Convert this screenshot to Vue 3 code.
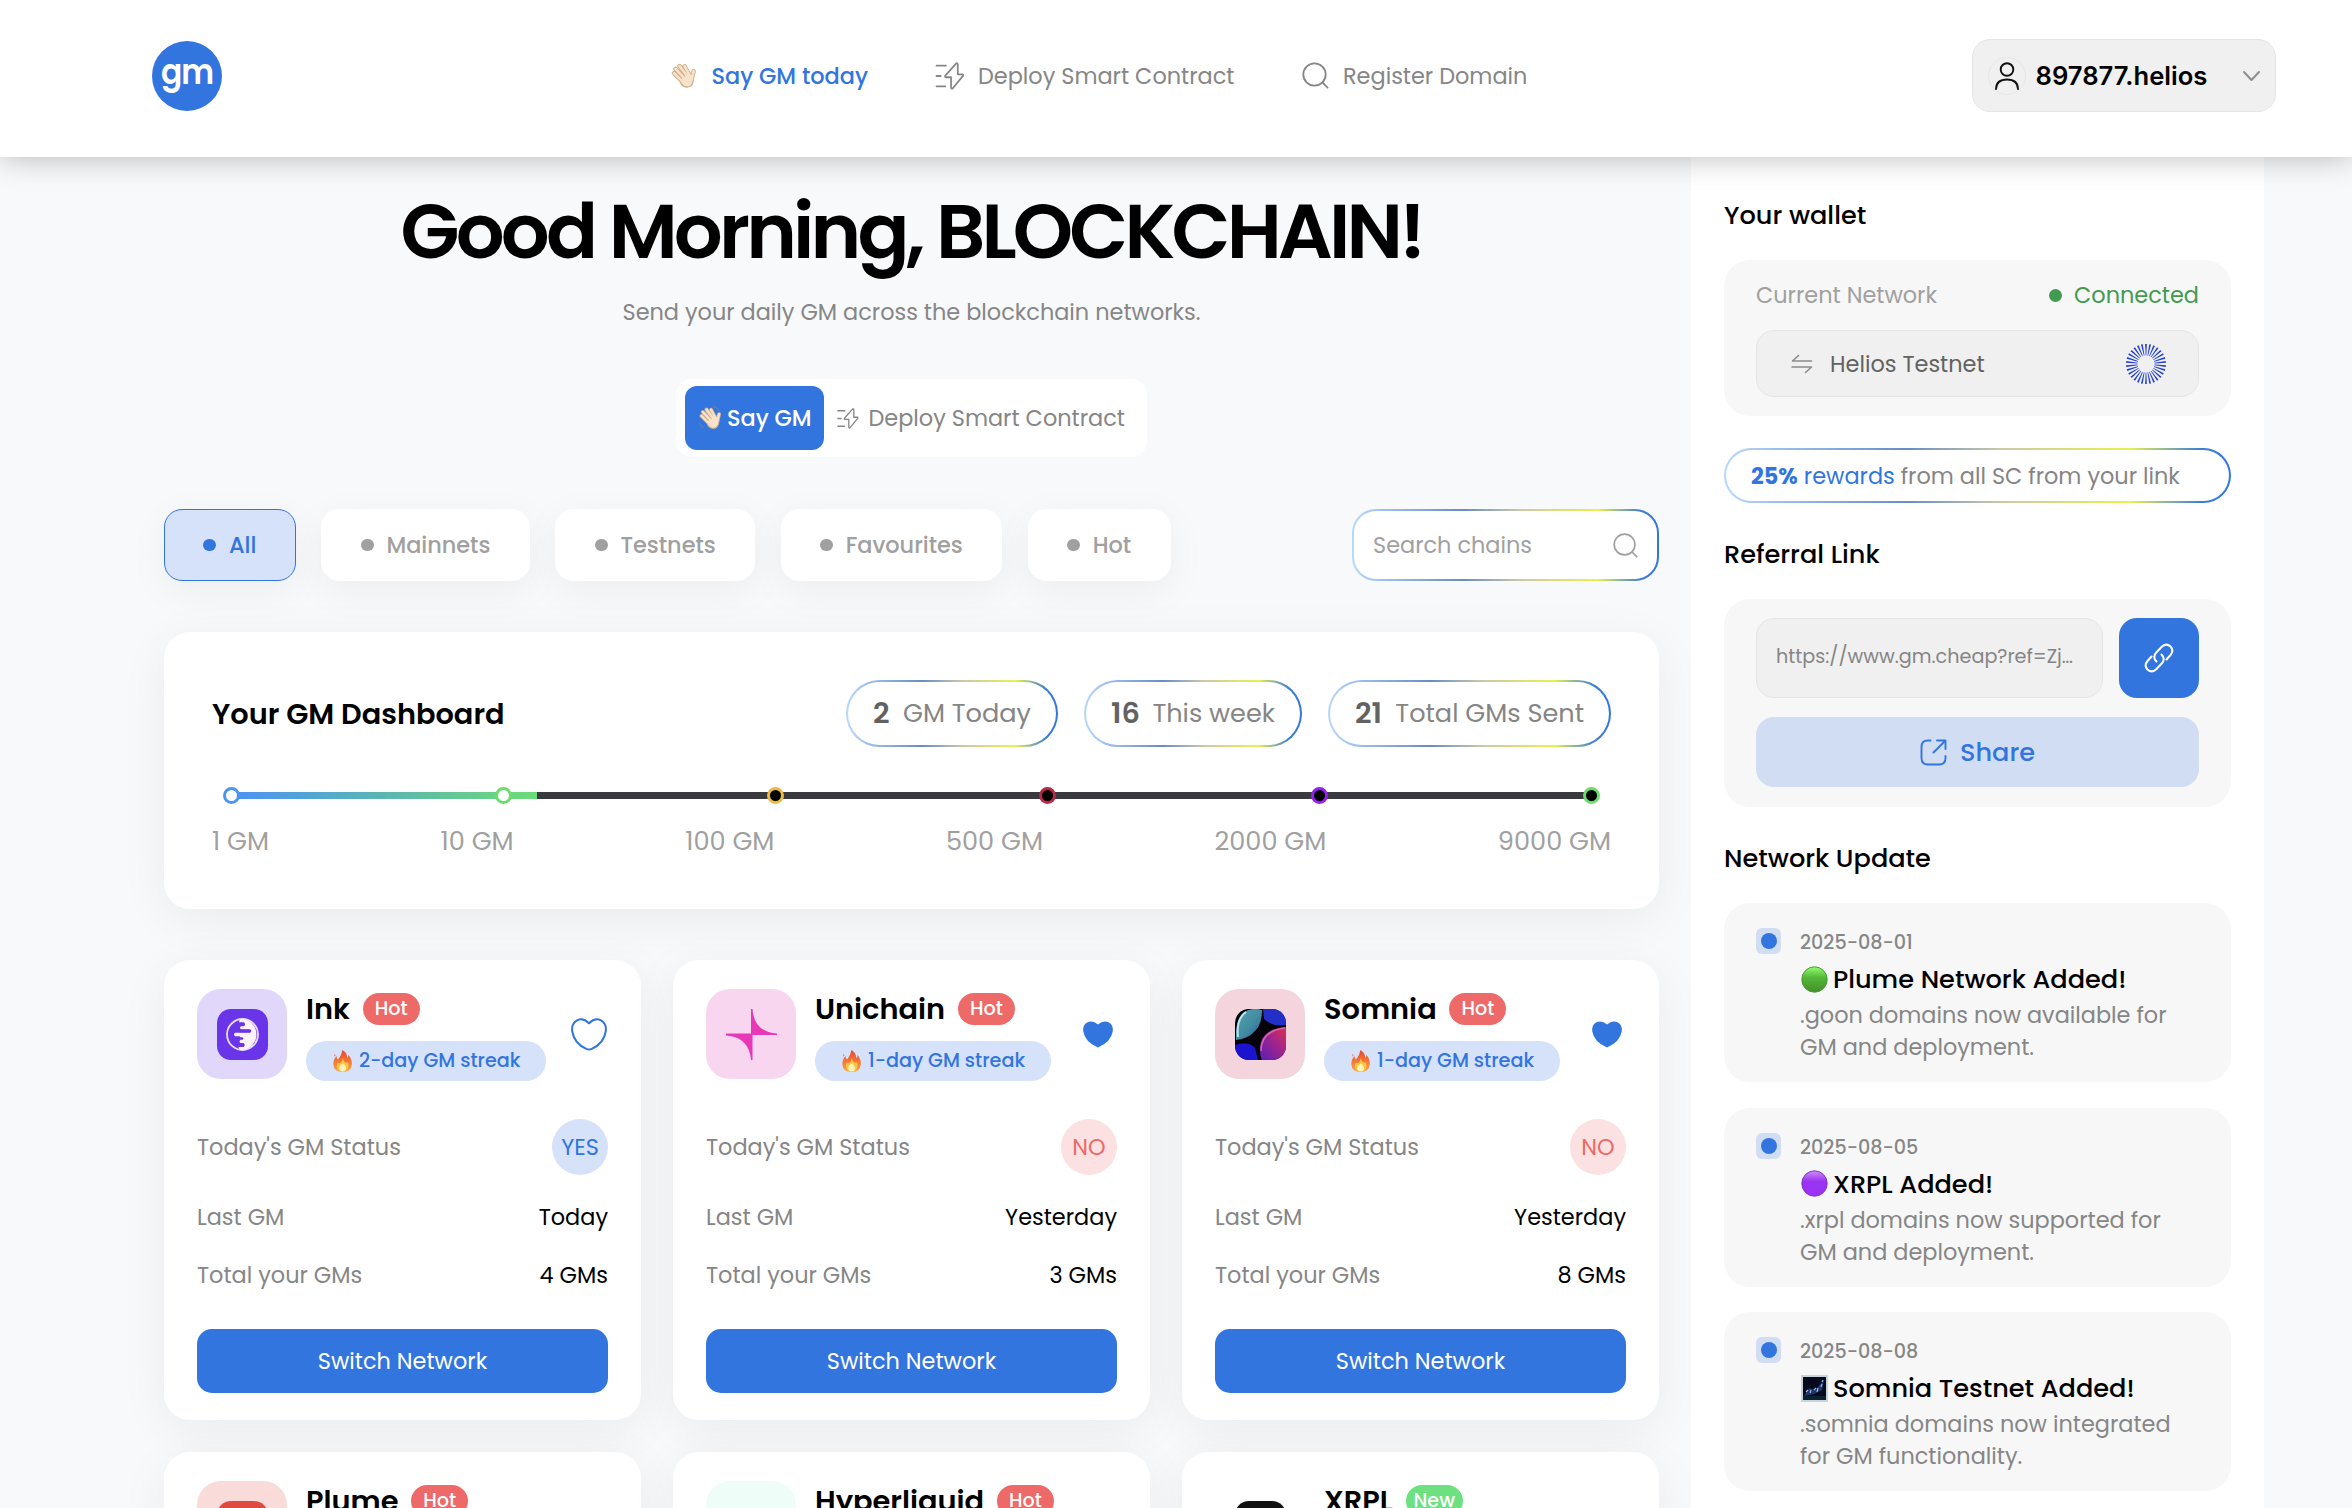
<script setup>
const filters = [
  { label: 'All', active: true },
  { label: 'Mainnets' },
  { label: 'Testnets' },
  { label: 'Favourites' },
  { label: 'Hot' }
]

const stats = [
  { value: '2', label: 'GM Today', width: 212 },
  { value: '16', label: 'This week', width: 218 },
  { value: '21', label: 'Total GMs Sent', width: 283 }
]

const stops = [
  { color: '#4b93f5', done: true },
  { color: '#6cdc70', done: true },
  { color: '#e8bd45' },
  { color: '#b82945' },
  { color: '#9421ef' },
  { color: '#6cdc70' }
]

const steps = ['1 GM', '10 GM', '100 GM', '500 GM', '2000 GM', '9000 GM']

const chains = [
  { id: 'ink', name: 'Ink', tag: 'Hot', tile: '#e1d7fa', streak: '2-day GM streak', yes: true, last: 'Today', total: '4 GMs', fav: false },
  { id: 'unichain', name: 'Unichain', tag: 'Hot', tile: '#f8d6ef', streak: '1-day GM streak', last: 'Yesterday', total: '3 GMs', fav: true },
  { id: 'somnia', name: 'Somnia', tag: 'Hot', tile: '#f4d5dd', streak: '1-day GM streak', last: 'Yesterday', total: '8 GMs', fav: true }
]

const nextChains = [
  { id: 'plume', name: 'Plume', tag: 'Hot', tile: '#f9dbda' },
  { id: 'hyper', name: 'Hyperliquid', tag: 'Hot', tile: '#effdf9' },
  { id: 'xrpl', name: 'XRPL', tag: 'New', tile: '#ffffff' }
]

const updates = [
  { date: '2025-08-01', icon: 'green', title: 'Plume Network Added!', lines: ['.goon domains now available for', 'GM and deployment.'] },
  { date: '2025-08-05', icon: 'purple', title: 'XRPL Added!', lines: ['.xrpl domains now supported for', 'GM and deployment.'] },
  { date: '2025-08-08', icon: 'night', title: 'Somnia Testnet Added!', lines: ['.somnia domains now integrated', 'for GM functionality.'] }
]

const rays = Array.from({ length: 30 }, (_, i) => i * 12)
</script>

<template>
  <div class="page">
    <svg class="defs" width="0" height="0">
      <defs>
        <linearGradient id="skin" x1="0" y1="0" x2="1" y2="1">
          <stop offset="0" stop-color="#f6dfc7" /><stop offset="1" stop-color="#fbe6d0" />
        </linearGradient>
        <linearGradient id="flame" x1="0" y1="0" x2="0" y2="1">
          <stop offset="0" stop-color="#e8472c" /><stop offset=".6" stop-color="#f6803a" /><stop offset="1" stop-color="#f9a63c" />
        </linearGradient>
        <linearGradient id="green" x1="0" y1="0" x2="0" y2="1">
          <stop offset="0" stop-color="#8fff70" /><stop offset=".42" stop-color="#55b838" /><stop offset="1" stop-color="#438f2b" />
        </linearGradient>
        <linearGradient id="purple" x1="0" y1="0" x2="0" y2="1">
          <stop offset="0" stop-color="#cf8bf8" /><stop offset=".42" stop-color="#9b33f3" /><stop offset="1" stop-color="#9a31f5" />
        </linearGradient>
        <linearGradient id="teal" x1="0" y1="0" x2="1" y2="1">
          <stop offset="0" stop-color="#5aa0b4" /><stop offset=".55" stop-color="#418ca0" /><stop offset="1" stop-color="#2b58b0" />
        </linearGradient>
        <linearGradient id="magenta" x1="1" y1="0" x2="0" y2="1">
          <stop offset="0" stop-color="#e02c50" /><stop offset=".45" stop-color="#a0258c" /><stop offset="1" stop-color="#5a1fb4" />
        </linearGradient>
        <clipPath id="round"><rect width="51" height="51" rx="14" /></clipPath>
        <symbol id="wave" viewBox="0 0 26 27">
          <g fill="none" stroke="#cfae8b" stroke-linecap="round" stroke-linejoin="round">
            <path stroke-width="4.400" d="M3 11.200l7 7M4.500 6.800l8 8.500M8.500 4l7.500 10M13.600 4.200l5.400 10M22.600 9.200 20.500 18" />
            <path stroke-width="1.400" fill="url(#skin)" d="M8.500 17.500 18.500 11l3.500 2.500q1 8-2.500 10.500-3.500 2-7 .2-2.500-1.700-4-6.700Z" />
          </g>
          <g fill="none" stroke="#f8e2ca" stroke-linecap="round">
            <path stroke-width="2.600" d="M3 11.200l7 7M4.500 6.800l8 8.500M8.500 4l7.500 10M13.600 4.200l5.400 10M22.600 9.200 20.500 18" />
            <path stroke-width="7" d="M13.500 19l4-1.500" />
          </g>
        </symbol>
        <symbol id="bolt" viewBox="0 0 28 27">
          <g fill="none" stroke="currentColor" stroke-width="1.700" stroke-linecap="round" stroke-linejoin="round">
            <path d="M1 3.500h9M1 13.500h4M1 23.500h8.500" />
            <path d="M19.800 1.500 9.500 13.200q-.8 1.300.5 1.500h5v10q.4 1.800 1.700.6L26.500 13.400q.8-1.300-.6-1.500h-4.400V2.300q-.3-1.700-1.700-.8Z" />
          </g>
        </symbol>
        <symbol id="search" viewBox="0 0 27 27">
          <g fill="none" stroke="currentColor" stroke-width="1.800" stroke-linecap="round">
            <circle cx="12.500" cy="12.500" r="11.200" /><path d="m20.800 20.800 4.800 4.800" />
          </g>
        </symbol>
      </defs>
    </svg>

    <header class="top">
      <div class="logo"><span>gm</span></div>
      <nav class="nav">
        <a class="link on"><svg class="i-hand"><use href="#wave" /></svg><span>Say GM today</span></a>
        <a class="link second"><svg class="i-bolt"><use href="#bolt" /></svg><span>Deploy Smart Contract</span></a>
        <a class="link third"><svg class="i-search"><use href="#search" /></svg><span>Register Domain</span></a>
      </nav>
      <button class="account">
        <i class="avatar">
          <svg width="26" height="28" viewBox="0 0 26 28" fill="none" stroke="#111" stroke-width="1.900" stroke-linecap="round">
            <circle cx="13" cy="7.500" r="6.300" /><path d="M2 27q.3-9.500 11-9.500T24 27" />
          </svg>
        </i>
        <span>897877.helios</span>
        <svg class="chev" width="19" height="12" viewBox="0 0 19 12" fill="none" stroke="#8d8d8d" stroke-width="2" stroke-linecap="round" stroke-linejoin="round"><path d="m2 2 7.500 8L17 2" /></svg>
      </button>
    </header>

    <div class="body">
      <main class="main">
        <h1>Good Morning, BLOCKCHAIN!</h1>
        <p class="sub">Send your daily GM across the blockchain networks.</p>

        <div class="switch">
          <button class="say">
            <svg class="i-hand" viewBox="-1 -1 28 29">
              <use href="#wave" width="26" height="27" />
              <path d="M16 .5q4 .500 5.500 4.500M.5 18.500q.8 4 4.500 5.500" fill="none" stroke="#5f7ea8" stroke-width="1.400" stroke-linecap="round" />
            </svg>
            <span>Say GM</span>
          </button>
          <button class="deploy"><svg class="i-bolt"><use href="#bolt" /></svg><span>Deploy Smart Contract</span></button>
        </div>

        <div class="filters">
          <button v-for="f in filters" :key="f.label" class="chip" :class="{ active: f.active }">
            <i></i><span>{{ f.label }}</span>
          </button>
          <label class="search"><span>Search chains</span><svg><use href="#search" /></svg></label>
        </div>

        <section class="dash">
          <div class="dash-head">
            <h2>Your GM Dashboard</h2>
            <div class="stats">
              <div v-for="s in stats" :key="s.label" class="stat" :style="{ width: s.width + 'px' }">
                <b>{{ s.value }}</b><span>{{ s.label }}</span>
              </div>
            </div>
          </div>
          <div class="track">
            <div class="line"><div class="done"></div></div>
            <div class="stops">
              <i v-for="(s, n) in stops" :key="n" :class="{ hit: s.done }" :style="{ borderColor: s.color }"></i>
            </div>
          </div>
          <div class="steps"><span v-for="s in steps" :key="s">{{ s }}</span></div>
        </section>

        <section class="grid">
          <article v-for="c in chains" :key="c.id" class="card">
            <div class="head">
              <div class="tile" :style="{ background: c.tile }">
                <svg width="51" height="51" viewBox="0 0 51 51">
                  <g v-if="c.id === 'ink'" clip-path="url(#round)">
                    <rect width="51" height="51" fill="#6a34e8" />
                    <circle cx="25.500" cy="25.500" r="15.500" fill="none" stroke="#e9dcfb" stroke-width="1.800" />
                    <path d="M24 10a15.500 15.500 0 1 1 0 31q-2.500-1-2.500-3h5q2.500-2 0-4h-3q-2-1.500 0-3h-1q2.500-2 0-3.800H18q-2-1.700 0-3.500h15q2.500-1.700 0-3.500H24q-2-1.500 0-3h3q2-2 0-4h-5q0-2.500 2-3.200Z" fill="#fdf4fb" />
                    <path d="M23 22h10M19 29.500h6" stroke="#6a34e8" stroke-width="2.600" stroke-linecap="round" />
                  </g>
                  <path v-else-if="c.id === 'unichain'" d="M25 0h1.500Q28 23 51 24.500V26H26.500v25H25Q23 28 0 26.500V24.500h25Z" fill="#e838b8" />
                  <g v-else clip-path="url(#round)">
                    <rect width="51" height="51" fill="#04030a" />
                    <path d="M28 0h23v16q-14 2-22-6Z" fill="#2330c8" />
                    <path d="M1 31Q0 10 9 3q9-5 18-2 0 14-7 21Q13 30 1 31Z" fill="url(#teal)" />
                    <path d="M3 28Q1 10 11 3" fill="none" stroke="#b9e6ee" stroke-width="2" />
                    <path d="M0 36q14-4 20 3l3 12H8Q0 46 0 36Z" fill="#1b14cf" />
                    <path d="M51 18Q25 20 25 40q0 8 2 11h14q10-2 10-12Z" fill="url(#magenta)" />
                    <path d="M50 19Q26 22 26 42" fill="none" stroke="#d567b0" stroke-width="1.500" />
                  </g>
                </svg>
              </div>
              <div class="info">
                <div class="name"><h3>{{ c.name }}</h3><em>{{ c.tag }}</em></div>
                <div class="streak">
                  <svg width="19" height="22" viewBox="0 0 19 22">
                    <path d="M9.500 0q5 3 4.500 8 1.500-.5 1.500-3 3.500 4 3.300 9-.6 8-9.300 8T.3 14Q.5 9 3.500 6q0 3 1.600 3.600Q8.500 5.500 9.500 0ZM1 4l1.500 1L2 7Z" fill="url(#flame)" />
                    <path d="M9.700 8q.5 3 2.800 4.500 1.300 1 1.700-.8 1.800 2 1.300 5-1 5-5.800 5T3.800 17q-.3-3 1.200-4.600.8 1 1.500.8Q9.500 12 9.700 8Z" fill="#fbc540" />
                    <path d="M9.500 13.500q3.500 2 3.500 5-.5 3-3.400 3t-3.400-3q.1-3 3.300-5Z" fill="#fff3b8" />
                  </svg>
                  <span>{{ c.streak }}</span>
                </div>
              </div>
              <svg class="heart" width="39" height="39" viewBox="0 0 39 39">
                <path v-if="c.fav" d="M20 9.500Q14.500 4.500 9 7.500 4.500 10 5.300 16.500 7 27 20 32.500 33 27 34.700 16.500 35.500 10 31 7.500 25.500 4.500 20 9.500Z" fill="#3275df" />
                <path v-else d="M20 8.200Q14 2.200 8 5.300 2.300 8.500 3.200 16 5 28.500 17.300 33.800q2.700 1.200 5.400 0Q35 28.500 36.800 16 37.700 8.500 32 5.300 26 2.200 20 8.200Z" fill="none" stroke="#3275df" stroke-width="2" stroke-linejoin="round" />
              </svg>
            </div>
            <div class="row status">
              <span>Today's GM Status</span>
              <i :class="{ yes: c.yes }">{{ c.yes ? 'YES' : 'NO' }}</i>
            </div>
            <div class="row last"><span>Last GM</span><b>{{ c.last }}</b></div>
            <div class="row total"><span>Total your GMs</span><b>{{ c.total }}</b></div>
            <button class="go">Switch Network</button>
          </article>

          <article v-for="c in nextChains" :key="c.id" class="card">
            <div class="head">
              <div class="tile" :style="{ background: c.tile }">
                <svg width="51" height="51" viewBox="0 0 51 51">
                  <rect v-if="c.id === 'plume'" width="51" height="51" rx="14" fill="#e0493f" />
                  <path v-else-if="c.id === 'hyper'" d="M2 27q0-16 11-17 7 0 12 6 5-9 13-9 12 0 12 20T38 44q-7 0-13-8-5 6-12 6Q2 40 2 27Z" fill="#9cefd9" />
                  <rect v-else width="51" height="51" rx="14" fill="#111111" />
                </svg>
              </div>
              <div class="info">
                <div class="name"><h3>{{ c.name }}</h3><em :class="c.tag.toLowerCase()">{{ c.tag }}</em></div>
              </div>
            </div>
          </article>
        </section>
      </main>

      <aside class="side">
        <h4>Your wallet</h4>
        <div class="wallet">
          <div class="net">
            <span>Current Network</span>
            <div class="conn"><i></i><span>Connected</span></div>
          </div>
          <div class="testnet">
            <svg width="22" height="20" viewBox="0 0 22 20" fill="none" stroke="#8b8b8b" stroke-width="1.600" stroke-linecap="round" stroke-linejoin="round"><path d="M7.500 1.500 1.500 7h19M1 13h19.500l-6 5.500" /></svg>
            <span>Helios Testnet</span>
            <svg class="helios" width="40" height="40" viewBox="-20 -20 40 40">
              <path v-for="r in rays" :key="r" d="M-.3-8.500h.6L.9-20H-.9Z" fill="#2440d2" :transform="`rotate(${r})`" />
            </svg>
          </div>
        </div>
        <div class="reward"><p><b>25%</b> <strong>rewards</strong> from all SC from your link</p></div>

        <h4 class="ref-title">Referral Link</h4>
        <div class="referral">
          <div class="ref-row">
            <div class="url">https://www.gm.cheap?ref=Zj…</div>
            <button class="copy">
              <svg width="30" height="30" viewBox="0 0 30 30" fill="none" stroke="#fff" stroke-width="2" stroke-linecap="round">
                <path d="M12.500 18.500q-4.500-4.500 0-9.200l5.500-5.800q4.500-3.800 8.500 0 3.800 4 0 8.500l-4 4.500M17.500 11.500q4.500 4.500 0 9.200L12 26.500q-4.500 3.800-8.500 0-3.800-4 0-8.500l4-4.500" />
              </svg>
            </button>
          </div>
          <button class="share">
            <svg width="27" height="27" viewBox="0 0 27 27" fill="none" stroke="#3275df" stroke-width="1.900" stroke-linecap="round" stroke-linejoin="round">
              <path d="M10.500 1.500H8q-6.500 0-6.500 6.500v11q0 6.500 6.500 6.500h11q6.500 0 6.500-6.500v-2M17 1.500h8.500v8.500M25 2 13.500 13.500" />
            </svg>
            <span>Share</span>
          </button>
        </div>

        <h4 class="upd-title">Network Update</h4>
        <div class="updates">
          <article v-for="u in updates" :key="u.date" class="update">
            <i class="mark"></i>
            <div>
              <div class="date">{{ u.date }}</div>
              <div class="title">
                <svg width="27" height="27" viewBox="0 0 27 27">
                  <template v-if="u.icon === 'night'">
                    <rect width="27" height="27" fill="#c9d3da" /><rect x="2" y="2" width="23" height="23" fill="#060a1c" />
                    <path d="M3 21 8 13l6 2 9-10-2 10-8 4Z" fill="#26427c" opacity=".8" />
                    <path d="m5 17 2-2m2 3 1-3m3 0 2-2m1 4 1-4m3-1 1-3m0-2 1-2" stroke="#90b8f0" stroke-width="1.200" />
                    <path d="M2 21h23v4H2z" fill="#0b2030" />
                  </template>
                  <circle v-else cx="13.500" cy="13.500" r="12.700" :fill="`url(#${u.icon})`" :stroke="u.icon === 'green' ? '#499a31' : '#8434c8'" stroke-width="1" />
                </svg>
                <span>{{ u.title }}</span>
              </div>
              <p v-for="l in u.lines" :key="l">{{ l }}</p>
            </div>
          </article>
        </div>
      </aside>
    </div>
  </div>
</template>

<style>
html, body { margin: 0; background: #f8f9fb; }
</style>

<style scoped>
.page {
  width: 2352px; height: 1508px; overflow: hidden; display: flex; flex-direction: column;
  background: #f8f9fb; color: #000; font: 400 22.400px/34px Poppins, Inter, sans-serif; white-space: nowrap;
}
.page *, .page *::before { box-sizing: border-box; }
.defs { position: absolute; }
button { font: inherit; border: 0; padding: 0; margin: 0; color: inherit; text-align: left; flex: none; }
h1, h2, h3, h4, p { margin: 0; font-weight: inherit; }
svg { display: block; flex: none; }
i, em { font-style: normal; display: block; flex: none; }

.top {
  height: 157px; flex: none; display: flex; align-items: center; padding: 0 76px 6px 152px; background: #fff;
  position: relative; z-index: 2; box-shadow: 0 0 30px rgba(0, 0, 0, .27);
}
.logo {
  width: 70px; height: 70px; border-radius: 50%; background: #3275df; color: #fff;
  display: flex; justify-content: center; font-weight: 600; font-size: 36px; line-height: 61px; letter-spacing: -1px;
}
.logo span { transform: scaleX(.87); }
.nav { display: flex; margin-left: 449px; color: #868686; }
.link { display: flex; align-items: center; }
.link.on { color: #3275df; font-weight: 500; width: 199px; }
.link .i-hand { width: 26px; height: 27px; margin-right: 14.500px; }
.link .i-bolt { width: 30px; height: 28px; margin-right: 13px; }
.link .i-search { width: 27px; height: 27px; margin-right: 14px; }
.second { margin-left: 65px; width: 301px; }
.third { margin-left: 66px; }
.account {
  margin-left: auto; width: 304px; height: 73px; border: 1px solid #e5e5e5; border-radius: 18px; background: #f0f0f0;
  display: flex; align-items: center; padding: 0 14px 0 15px; font: 600 25.600px/34px Inter, sans-serif; color: #000;
}
.avatar { width: 38px; height: 38px; border-radius: 50%; border: 1px solid #e6e6e6; display: flex; align-items: center; justify-content: center; margin-right: 9.500px; }
.chev { margin-left: auto; }

.body { display: flex; flex: 1; min-height: 0; }
.main { width: 1495px; margin-left: 164px; padding-top: 24px; flex: none; }
h1 { font-size: 76.800px; line-height: 100px; font-weight: 600; text-align: center; letter-spacing: -.05em; }
.sub { margin-top: 13px; line-height: 36px; color: #868686; text-align: center; }
.switch { width: 471px; height: 78px; margin: 49px auto 0; background: #fff; border-radius: 16px; display: flex; padding: 7px 9px; }
.say { width: 139px; height: 64px; border-radius: 12px; background: #3275df; color: #fff; display: flex; align-items: center; padding-left: 13px; font-weight: 500; }
.say .i-hand { width: 25px; height: 26px; margin-right: 4px; }
.deploy { background: none; display: flex; align-items: center; padding-left: 12.500px; color: #868686; }
.deploy .i-bolt { width: 22px; height: 21px; margin-right: 10px; }

.filters { display: flex; gap: 25.600px; margin-top: 52px; }
.chip {
  height: 72px; border-radius: 18px; background: #fff; border: 1.600px solid #fff; display: flex; align-items: center; padding: 0 38.400px;
  color: #a0a0a0; font-weight: 500; box-shadow: 0 10px 40px rgba(0, 0, 0, .05);
}
.chip i { width: 12.800px; height: 12.800px; border-radius: 50%; background: currentColor; margin-right: 12.800px; }
.chip.active { background: #d6e2f9; border-color: #3275df; color: #3275df; }
.search, .stat, .reward {
  border: 2px solid transparent;
  background: linear-gradient(#fff, #fff) padding-box,
    linear-gradient(90deg, #b8d8fc 0%, #9fc0ee 10%, #6a8cc4 36%, #ccc9a8 55%, #e8f24c 80%, #3d7fd4 94%, #3275df 100%) border-box;
}
.search { width: 307px; height: 72px; margin-left: auto; border-radius: 24px; display: flex; align-items: center; justify-content: space-between; padding: 0 19px 0 19px; color: #a0a0a0; }
.search svg { width: 25px; height: 25px; }

.dash { height: 277px; margin-top: 51px; border-radius: 26px; background: #fff; padding: 48px 48px 0; box-shadow: 0 10px 50px rgba(0, 0, 0, .06); }
.dash-head { display: flex; align-items: center; height: 67px; justify-content: space-between; }
h2 { font-size: 28.800px; font-weight: 600; }
.stats { display: flex; gap: 26px; }
.stat { height: 67px; border-radius: 34px; display: flex; align-items: center; justify-content: space-between; padding: 0 25px 1px; font-size: 25.600px; color: #858585; }
.stat b { font-size: 28.800px; font-weight: 600; color: #626262; }
.track { position: relative; height: 17px; margin: 39.500px 19px 0 19.500px; }
.line { position: absolute; left: 0; right: 0; top: 5px; height: 7px; background: #39393f; }
.done { width: 305px; height: 7px; background: linear-gradient(90deg, #4b93f5, #5ebda4 60%, #6cdc78); }
.stops { position: relative; display: flex; justify-content: space-between; margin: 0 -8.500px; }
.stops i { width: 17px; height: 17px; border-radius: 50%; border: 3px solid; background: #000; }
.stops i.hit { background: #fff; }
.steps { display: flex; justify-content: space-between; margin-top: 19px; font-size: 25.600px; line-height: 36px; color: #a0a0a0; }

.grid { display: grid; grid-template-columns: repeat(3, 477px); gap: 32px; margin-top: 51px; }
.card { height: 460px; border-radius: 26px; background: #fff; padding: 29px 33px 0; box-shadow: 0 10px 50px rgba(0, 0, 0, .06); color: #868686; }
.head { display: flex; align-items: center; height: 90px; }
.tile { width: 90px; height: 90px; border-radius: 24px; display: flex; align-items: center; justify-content: center; flex: none; }
.info { margin-left: 19px; height: 92px; padding-top: 5px; }
.name { display: flex; align-items: center; height: 32px; color: #000; }
h3 { font-size: 28.800px; font-weight: 600; margin-right: 12.800px; }
em { width: 57px; height: 32px; border-radius: 16px; text-align: center; background: #ed6a68; color: #fff; font-size: 19.200px; line-height: 32px; font-weight: 500; }
em.new { background: #6de080; }
.streak { display: flex; align-items: center; width: max-content; height: 40px; margin-top: 16px; padding: 0 26px 0 27px; border-radius: 20px; background: #d6e2f9; color: #3275df; font-size: 19.200px; font-weight: 500; }
.streak svg { margin-right: 7px; }
.heart { margin-left: auto; }
.row { display: flex; justify-content: space-between; align-items: center; height: 34px; }
.row b { font-weight: 400; color: #000; }
.status { height: 56px; margin-top: 40px; }
.status i { width: 56px; height: 56px; border-radius: 50%; background: #fbe1e1; color: #ed6a68; display: flex; align-items: center; justify-content: center; }
.status i.yes { background: #d6e2f9; color: #3275df; }
.last { margin-top: 25px; }
.total { margin-top: 24px; }
.go { margin-top: 37px; width: 411px; height: 64px; border-radius: 15px; background: #3275df; color: #fff; display: flex; align-items: center; justify-content: center; }

.side { width: 573px; margin-left: 32px; background: #fff; padding: 38px 33px 0; flex: none; }
h4 { font-size: 25.600px; line-height: 40px; font-weight: 500; }
.wallet, .referral, .update { background: #f7f7f7; border-radius: 26px; padding: 0 32px; }
.wallet { height: 156px; margin-top: 25px; padding-top: 17px; }
.net { display: flex; justify-content: space-between; height: 36px; align-items: center; color: #a0a0a0; }
.conn { display: flex; align-items: center; color: #439a52; }
.conn i { width: 13px; height: 13px; border-radius: 50%; background: #439a52; margin-right: 12px; }
.testnet { display: flex; align-items: center; height: 67px; margin-top: 17px; border: 1px solid #e5e5e5; border-radius: 18px; background: #f0f0f0; padding: 0 32px 0 34px; color: #626262; }
.testnet span { margin-left: 17px; }
.helios { margin-left: auto; }
.reward { height: 55px; margin-top: 32px; border-radius: 28px; display: flex; align-items: center; padding-left: 25px; color: #858585; }
.reward b, .reward strong { color: #3275df; }
.reward b { font-weight: 700; }
.reward strong { font-weight: 400; }
.ref-title, .upd-title { margin-top: 31px; }
.referral { height: 208px; margin-top: 25px; padding-top: 19px; }
.ref-row { display: flex; justify-content: space-between; }
.url { width: 347px; height: 80px; border: 1px solid #e5e5e5; border-radius: 18px; background: #f0f0f0; display: flex; align-items: center; padding: 0 0 3px 19px; font-size: 19.200px; color: #858585; }
.copy { width: 80px; height: 80px; border-radius: 18px; background: #3275df; display: flex; align-items: center; justify-content: center; }
.share { width: 443px; height: 70px; margin-top: 19px; border-radius: 18px; background: #d1ddf3; color: #3275df; font-weight: 500; font-size: 25.600px; display: flex; align-items: center; justify-content: center; gap: 13px; }
.updates { display: flex; flex-direction: column; gap: 25.500px; margin-top: 25px; }
.update { height: 179px; display: flex; padding-top: 25px; }
.mark { width: 25px; height: 26px; border-radius: 6px; background: #d1ddf3; display: flex; align-items: center; justify-content: center; margin-right: 19px; }
.mark::before { content: ""; width: 16px; height: 16px; border-radius: 50%; background: #3275df; }
.date { font-size: 19.200px; line-height: 28px; height: 28px; margin-top: 1px; font-weight: 500; color: #868686; }
.title { display: flex; align-items: center; height: 36px; margin-top: 4px; color: #000; font-size: 25.600px; font-weight: 500; }
.title svg { margin: 0 5px 0 1px; }
.update p { height: 32px; line-height: 32px; color: #868686; position: relative; top: 2px; }
</style>
